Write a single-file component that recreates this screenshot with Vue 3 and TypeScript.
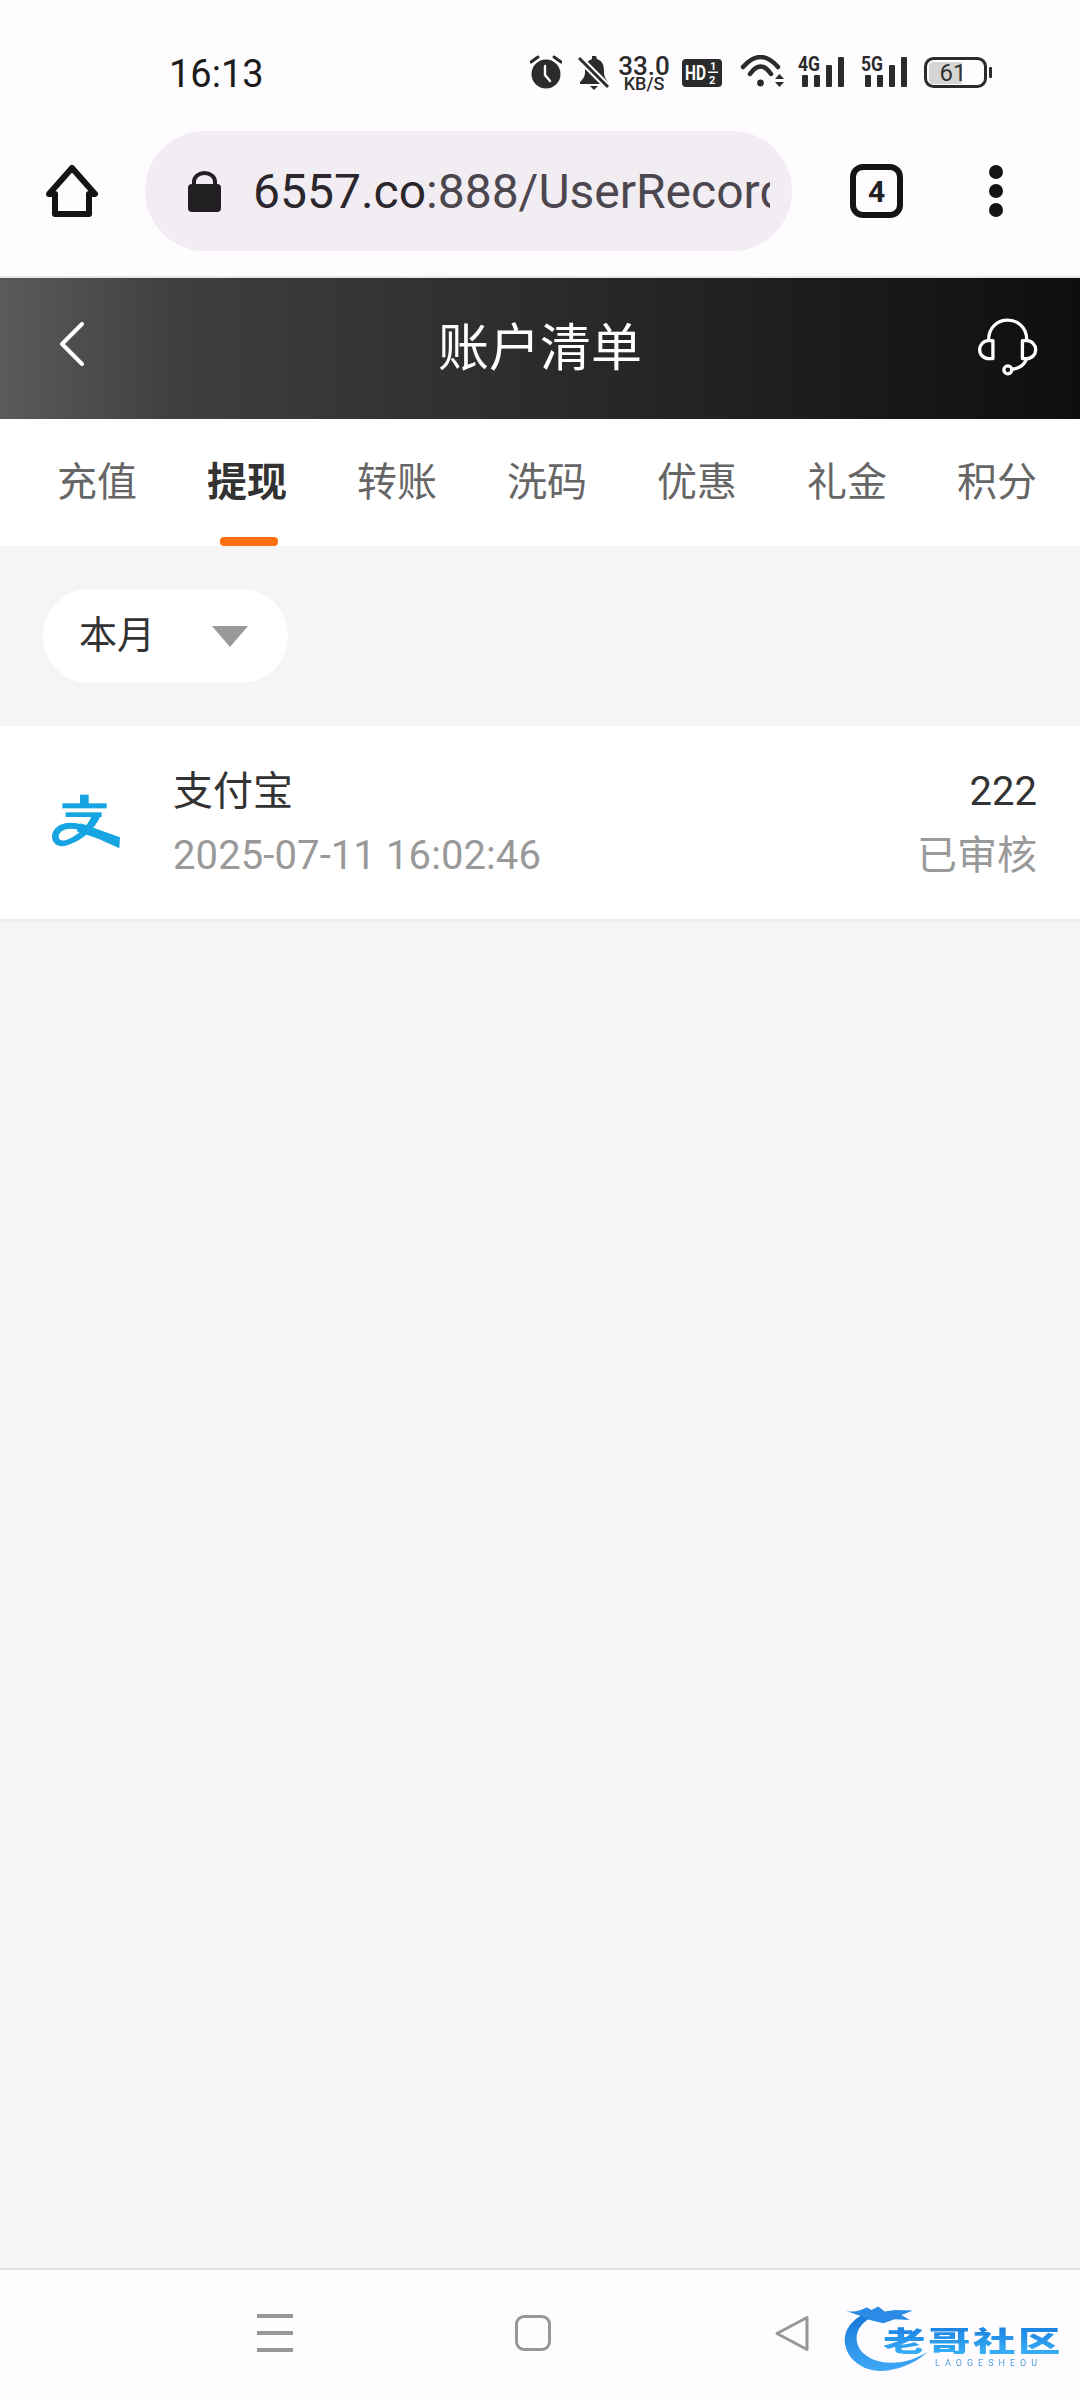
<template>
  <div class="page">
    <div class="status-bar">
      <span class="clock">16:13</span>
      <div class="status-icons">
        <!-- alarm -->
        <svg class="ic-alarm" width="32" height="34" viewBox="0 0 32 34">
          <circle cx="16" cy="19" r="14.5" fill="#2b2b2b" />
          <path d="M1 7 8 2M31 7 24 2" stroke="#2b2b2b" stroke-width="3" stroke-linecap="round" />
          <path d="M15 11V20L20 26" fill="none" stroke="#fff" stroke-width="2.4" stroke-linecap="round" />
        </svg>
        <!-- muted bell -->
        <svg class="ic-bell" width="32" height="36" viewBox="0 0 32 36">
          <path d="M14 1h4l1 3c6 2 7 7 7 13 0 5 2 7 4 10v2H2v-2c3-3 5-5 5-10 0-6 1-11 7-13z" fill="#2b2b2b" />
          <path d="M12 31h8l-4 4z" fill="#2b2b2b" />
          <path d="M1 3 31 33" stroke="#fefcff" stroke-width="7" />
          <path d="M1 3 30 32" stroke="#2b2b2b" stroke-width="3" />
        </svg>
        <div class="net-speed">
          <span class="net-num">33.0</span>
          <span class="net-unit">KB/S</span>
        </div>
        <!-- HD badge -->
        <svg class="ic-hd" width="40" height="28" viewBox="0 0 40 28">
          <rect width="40" height="28" rx="4" fill="#2b2b2b" />
          <text x="3" y="21" class="hd-text" textLength="21" lengthAdjust="spacingAndGlyphs">HD</text>
          <text x="28" y="11" class="hd-small">1</text>
          <rect x="26" y="12.5" width="10" height="1.5" fill="#fff" />
          <text x="27" y="25" class="hd-small">2</text>
        </svg>
        <!-- wifi -->
        <svg class="ic-wifi" width="46" height="34" viewBox="0 0 46 34">
          <path d="M3 12Q20.500 -8 38 12" fill="none" stroke="#2b2b2b" stroke-width="4.500" stroke-linecap="round" />
          <path d="M10 19Q20.500 4 31 19" fill="none" stroke="#2b2b2b" stroke-width="4.500" stroke-linecap="round" />
          <circle cx="20.5" cy="28" r="3.4" fill="#2b2b2b" />
          <path d="M35 24 39.500 19 44 24zM35 27H44L39.500 32z" fill="#2b2b2b" />
        </svg>
        <svg v-for="sig in signals" :key="sig" class="ic-signal" width="48" height="40" viewBox="0 -6 48 40">
          <text x="0" y="16" class="sig-text" textLength="22" lengthAdjust="spacingAndGlyphs">{{ sig }}</text>
          <rect x="4" y="20" width="6" height="12" rx="1" fill="#2b2b2b" />
          <rect x="16" y="20" width="6" height="12" rx="1" fill="#2b2b2b" />
          <rect x="28" y="10" width="6" height="22" rx="1" fill="#2b2b2b" />
          <rect x="40" y="2" width="6" height="30" rx="1" fill="#2b2b2b" />
        </svg>
        <!-- battery -->
        <svg class="ic-batt" width="69" height="32" viewBox="0 0 69 32">
          <rect x="1.5" y="1.5" width="60" height="28" rx="8" fill="none" stroke="#2b2b2b" stroke-width="3" />
          <path d="M9 5H38V27H9a4 4 0 0 1-4-4V9a4 4 0 0 1 4-4z" fill="#d6d5d6" />
          <rect x="65" y="10" width="3" height="11" rx="1" fill="#2b2b2b" />
          <text x="29" y="24" class="batt-text" text-anchor="middle">61</text>
        </svg>
      </div>
    </div>

    <div class="browser-bar">
      <svg class="ic-home" width="54" height="54" viewBox="0 0 54 54">
        <path d="M4 30 27 4 50 30H44V50H10V30Z" fill="none" stroke="#141414" stroke-width="6" stroke-linejoin="round" />
      </svg>
      <div class="url-pill">
        <svg class="ic-lock" width="33" height="41" viewBox="0 0 33 41">
          <path d="M6 16V10.500a10.500 8.500 0 0 1 21 0v5.500" fill="none" stroke="#221f22" stroke-width="4" />
          <rect y="13" width="33" height="28" rx="4" fill="#221f22" />
        </svg>
        <div class="url-text"><span class="url-host">6557.co</span>:888/UserRecord</div>
      </div>
      <div class="tab-count">4</div>
      <div class="more-dots"><i></i><i></i><i></i></div>
    </div>

    <header class="title-bar">
      <svg class="ic-back" width="26" height="44" viewBox="0 0 26 44">
        <path d="M23 2 3 22 23 42" fill="none" stroke="#fff" stroke-width="4" stroke-linecap="round" stroke-linejoin="round" />
      </svg>
      <h1 class="title">账户清单</h1>
      <svg class="ic-service" width="63" height="60" viewBox="50 48 190 180">
        <g fill="none" stroke="#fff" stroke-width="10">
          <path d="M85 120C85 40 200 40 200 120" />
          <path d="M98 122H85A27 27 0 0 0 85 176H98Z" stroke-linejoin="round" />
          <path d="M187 122H200A27 27 0 0 1 200 176H187Z" stroke-linejoin="round" />
          <path d="M198 180C190 200 175 205 158 208" stroke-linecap="round" />
          <circle cx="143" cy="210" r="12" />
        </g>
      </svg>
    </header>

    <nav class="tabs">
      <div
        v-for="(tab, i) in tabs"
        :key="tab"
        class="tab"
        :class="{ active: i === activeTab }"
        @click="activeTab = i"
      >
        {{ tab }}
      </div>
    </nav>

    <main class="content">
      <div class="filter-row">
        <div class="filter">
          <span>本月</span>
          <i class="arrow"></i>
        </div>
      </div>

      <div v-for="rec in records" :key="rec.time" class="record">
        <!-- alipay mark -->
        <svg class="ic-alipay" width="70" height="55" viewBox="66 68 210 165">
          <g fill="#17a4e2">
            <rect x="150" y="70" width="26" height="34" />
            <rect x="97" y="96" width="133" height="15" />
            <rect x="107" y="123" width="108" height="14" />
            <path d="M152 156 270 198 268 231 205 202 140 180Z" />
            <path d="M186 132H212C196 172 160 206 112 222C86 231 66 216 66 196C66 172 90 154 122 154C134 154 146 156 160 160L168 182C152 176 136 172 122 172C102 172 86 182 86 196C86 206 96 210 108 206C144 194 172 166 186 132Z" />
          </g>
        </svg>
        <div class="record-info">
          <div class="record-name">{{ rec.name }}</div>
          <div class="record-time">{{ rec.time }}</div>
        </div>
        <div class="record-side">
          <div class="record-amount">{{ rec.amount }}</div>
          <div class="record-state">{{ rec.state }}</div>
        </div>
      </div>
    </main>

    <footer class="nav-bar">
      <div class="nav-menu"><i></i><i></i><i></i></div>
      <div class="nav-home"></div>
      <svg class="nav-back" width="36" height="37" viewBox="0 0 36 37">
        <path d="M33 2.500V34.500L3 18.500Z" fill="none" stroke="#99969a" stroke-width="3" stroke-linejoin="round" />
      </svg>

      <!-- community watermark sits on top of the bar -->
      <div class="watermark">
        <svg class="wm-ring" width="93" height="72" viewBox="60 70 280 215">
          <defs>
            <linearGradient id="ringFill" x1="0" y1="0" x2="0" y2="1">
              <stop offset="0" stop-color="#1677d8" />
              <stop offset="1" stop-color="#3fa9f5" />
            </linearGradient>
          </defs>
          <path d="M135 100C85 125 65 165 78 205C95 255 150 280 205 272C250 265 295 245 325 215C290 238 245 252 200 248C150 244 110 215 110 175C110 150 125 130 150 115Z" fill="url(#ringFill)" />
          <path d="M68 88C90 100 120 95 140 82L155 90 175 80 195 95 225 90 280 92 245 105 270 120 225 118 190 130 150 120C130 110 95 100 68 88Z" fill="#2a8ae6" />
        </svg>
        <span class="wm-name">老哥社区</span>
        <span class="wm-sub">LAOGESHEOU</span>
      </div>
    </footer>
  </div>
</template>

<script setup lang="ts">
import { ref } from "vue"

interface RecordRow {
  name: string
  time: string
  amount: string
  state: string
}

const signals = ["4G", "5G"]
const tabs = ["充值", "提现", "转账", "洗码", "优惠", "礼金", "积分"]
const activeTab = ref(1)

const records: RecordRow[] = [
  { name: "支付宝", time: "2025-07-11 16:02:46", amount: "222", state: "已审核" },
]
</script>

<style>
html,
body {
  margin: 0;
  background: #f5f5f5;
}
</style>

<style scoped>
.page {
  display: flex;
  flex-direction: column;
  width: 1080px;
  height: 2400px;
  overflow: hidden;
  font-family: Roboto, "Noto Sans CJK SC", sans-serif;
  background: #f5f5f5;
}

/* status bar */
.status-bar {
  display: flex;
  align-items: flex-start;
  box-sizing: border-box;
  height: 110px;
  padding: 55px 87px 0 169px;
  background: #fefcff;
  color: #2b2b2b;
}
.clock {
  margin-top: 2px;
  font-size: 38px;
  line-height: 34px;
  color: #1c1c1c;
}
.status-icons {
  display: flex;
  align-items: flex-start;
  margin-left: auto;
}
.ic-bell { margin-left: 16px; }
.net-speed {
  display: flex;
  flex-direction: column;
  align-items: center;
  width: 48px;
  margin-left: 10px;
  font-weight: 500;
}
.net-num { font-size: 26px; line-height: 22px; }
.net-unit { font-size: 18px; line-height: 14px; }
.ic-hd { margin: 4px 0 0 14px; }
.ic-wifi { margin-left: 18px; }
.ic-signal { margin: -6px 0 0 12px; }
.ic-signal + .ic-signal { margin-left: 15px; }
.ic-batt { margin: 2px 0 0 15px; }
.hd-text { font: 700 21px Roboto, sans-serif; fill: #fff; }
.hd-small { font: 700 11px Roboto, sans-serif; fill: #fff; }
.sig-text { font: 700 20px Roboto, sans-serif; fill: #2b2b2b; }
.batt-text { font: 400 24px Roboto, sans-serif; fill: #333; }

/* browser toolbar */
.browser-bar {
  display: flex;
  align-items: center;
  box-sizing: border-box;
  height: 168px;
  padding: 0 0 4px 45px;
  background: #fefcff;
  border-bottom: 2px solid #e9e6e9;
}
.url-pill {
  display: flex;
  align-items: center;
  box-sizing: border-box;
  width: 647px;
  height: 120px;
  margin-left: 46px;
  padding: 0 22px 0 43px;
  border-radius: 60px;
  background: #f1edf2;
}
.ic-lock { flex-shrink: 0; }
.url-text {
  margin-left: 32px;
  overflow: hidden;
  white-space: nowrap;
  font-size: 48px;
  color: #4c474e;
}
.url-host { color: #2a262c; }
.tab-count {
  display: flex;
  align-items: center;
  justify-content: center;
  box-sizing: border-box;
  width: 53px;
  height: 54px;
  margin-left: 58px;
  border: 6px solid #141414;
  border-radius: 13px;
  font-size: 30px;
  font-weight: 700;
  color: #222;
}
.more-dots {
  display: flex;
  flex-direction: column;
  gap: 5px;
  margin-left: 86px;
}
.more-dots i {
  width: 14px;
  height: 14px;
  border-radius: 50%;
  background: #141414;
}

/* title */
.title-bar {
  display: grid;
  grid-template-columns: 1fr auto 1fr;
  align-items: center;
  box-sizing: border-box;
  height: 141px;
  padding: 0 40px 9px;
  background: linear-gradient(90deg, #5b5a59 0, #413f3e 16%, #0e0e0e 100%);
}
.ic-back {
  margin-left: 19px;
}
.title {
  margin: 0;
  font-size: 51px;
  font-weight: 400;
  color: #fff;
}
.ic-service {
  justify-self: end;
  margin-top: 4px;
}

/* tabs */
.tabs {
  display: flex;
  box-sizing: border-box;
  height: 127px;
  padding-left: 22px;
  background: #fff;
}
.tab {
  position: relative;
  width: 150px;
  font-size: 40px;
  line-height: 127px;
  text-align: center;
  color: #666;
}
.tab.active {
  font-weight: 700;
  color: #333;
}
.tab.active::after {
  content: "";
  position: absolute;
  left: 48px;
  bottom: 0;
  width: 58px;
  height: 9px;
  border-radius: 4px;
  background: #ff6f0f;
}

/* filter + list */
.content {
  flex: 1;
  background: #f5f5f5;
}
.filter-row {
  padding: 43px 0;
}
.filter {
  display: flex;
  align-items: center;
  box-sizing: border-box;
  width: 245px;
  height: 94px;
  margin-left: 43px;
  padding-left: 36px;
  border-radius: 47px;
  background: #fff;
  font-size: 38px;
  color: #333;
}
.filter span {
  padding-bottom: 10px;
}
.arrow {
  width: 0;
  height: 0;
  margin-left: 57px;
  border-style: solid;
  border-width: 21px 18px 0;
  border-color: #999 transparent transparent;
}
.record {
  display: flex;
  align-items: center;
  box-sizing: border-box;
  height: 196px;
  padding: 2px 43px 0 52px;
  background: #fff;
  border-bottom: 3px solid #eee;
}
.ic-alipay {
  flex-shrink: 0;
  margin-top: -4px;
}
.record-info { margin-left: 51px; }
.record-side { margin-left: auto; text-align: right; }
.record-name,
.record-amount {
  font-size: 40px;
  line-height: 64px;
  color: #333;
}
.record-time,
.record-state {
  font-size: 40px;
  line-height: 64px;
  color: #999;
}
.record-time { letter-spacing: 0.1px; }

/* system nav */
.nav-bar {
  position: relative;
  display: flex;
  align-items: center;
  box-sizing: border-box;
  height: 132px;
  padding: 0 0 4px 257px;
  background: #fefcff;
  border-top: 2px solid #e2e0e2;
}
.nav-menu {
  display: flex;
  flex-direction: column;
  gap: 13px;
  width: 36px;
}
.nav-menu i {
  height: 4px;
  background: #99969a;
}
.nav-home {
  box-sizing: border-box;
  width: 36px;
  height: 36px;
  margin-left: 222px;
  border: 3px solid #99969a;
  border-radius: 9px;
}
.nav-back { margin-left: 223px; }

.watermark {
  position: absolute;
  left: 840px;
  top: 33px;
  width: 232px;
  height: 74px;
  filter: blur(0.6px);
}
.wm-ring {
  position: absolute;
  left: 0;
  top: 0;
}
.wm-name {
  position: absolute;
  left: 43px;
  top: 20px;
  font-family: "Noto Sans CJK SC", sans-serif;
  font-size: 34px;
  font-weight: 900;
  line-height: 34px;
  letter-spacing: 2px;
  white-space: nowrap;
  transform: scale(1.25, 0.85);
  transform-origin: left center;
  background: linear-gradient(180deg, #1a7fe0, #37b0f6);
  -webkit-background-clip: text;
  background-clip: text;
  color: transparent;
}
.wm-sub {
  position: absolute;
  left: 95px;
  top: 55px;
  font-size: 9px;
  line-height: 11px;
  letter-spacing: 5px;
  white-space: nowrap;
  color: #4f9fe0;
}
</style>
